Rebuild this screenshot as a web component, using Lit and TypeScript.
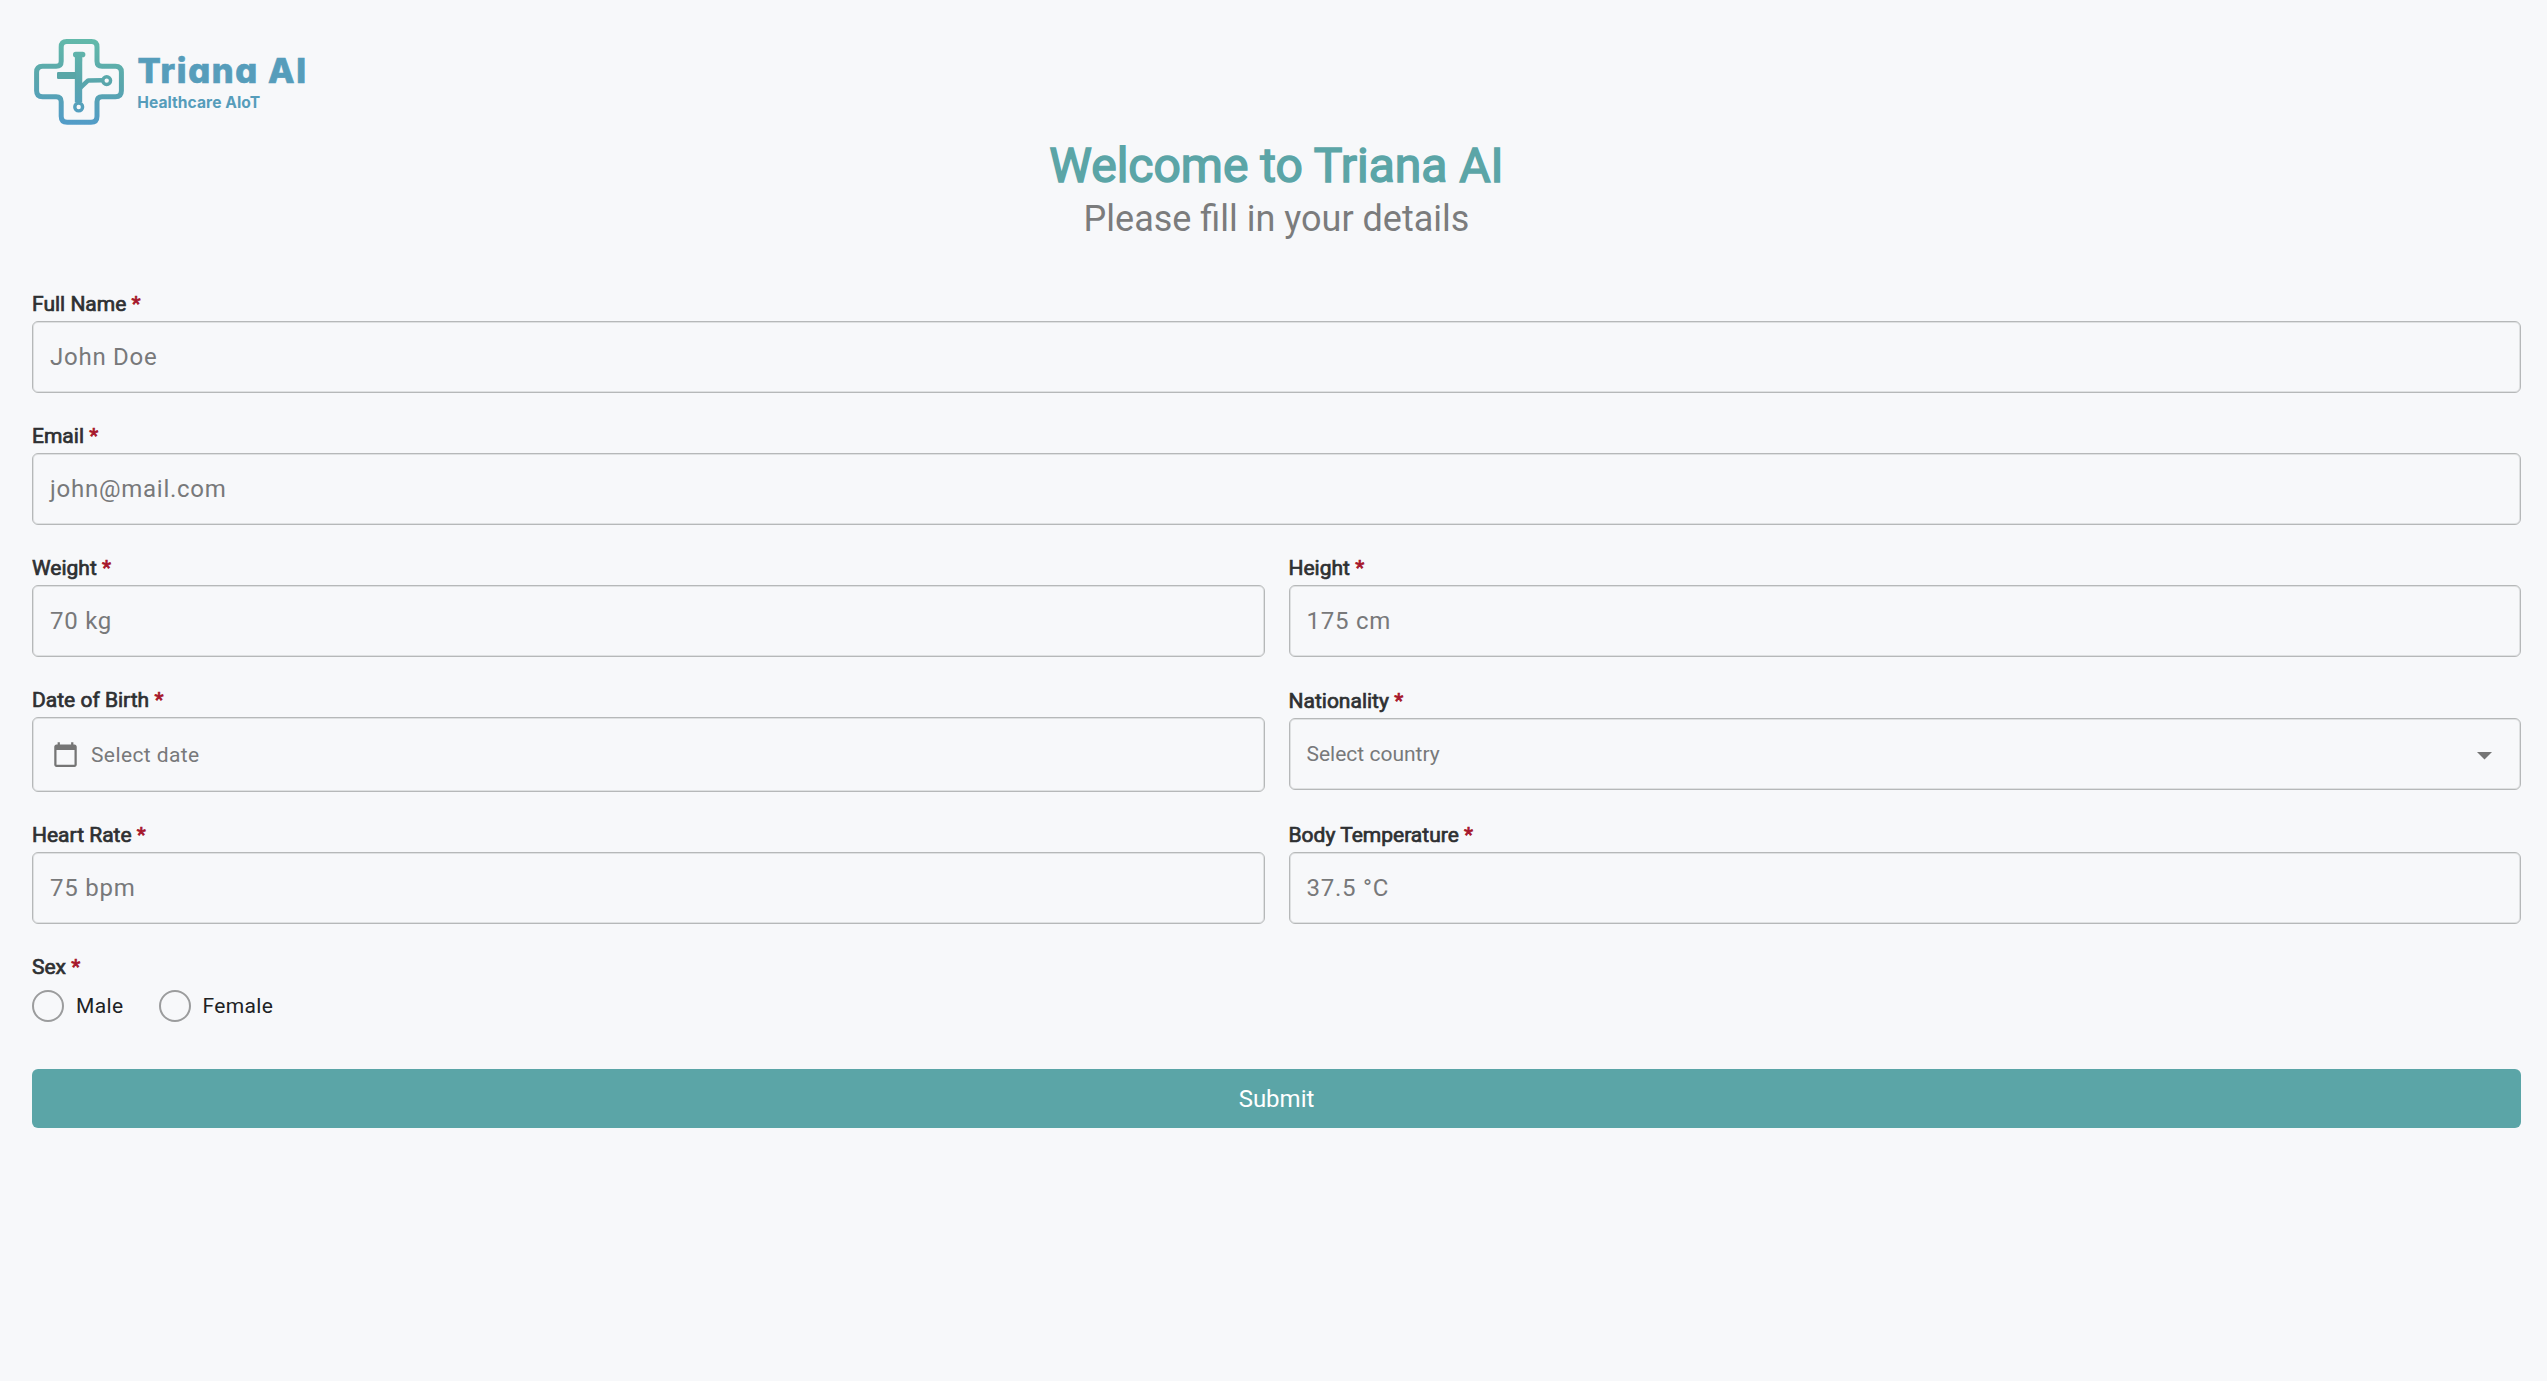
import { LitElement, html, svg, css, nothing } from "lit";
import { customElement, property } from "lit/decorators.js";

@customElement("brand-logo")
class BrandLogo extends LitElement {
  static styles = css`
    :host { display: block; height: 96px; }
    svg { display: block; }
    .name { font: 800 34.4px Inter, sans-serif; font-feature-settings: "cv11"; fill: #569dbb; stroke: #569dbb; stroke-width: .7px; stroke-linejoin: miter; }
    .tag { font: 700 15.6px Inter, sans-serif; fill: #569dbb; }
  `;
  render() {
    return html`<svg width="280" height="96" viewBox="32 32 280 96" role="img" aria-label="Triana AI">
      <defs>
        <linearGradient id="g" gradientUnits="userSpaceOnUse" x1="85" y1="40" x2="78" y2="124">
          <stop offset="0" stop-color="#62b9aa"></stop>
          <stop offset=".5" stop-color="#59a6ac"></stop>
          <stop offset="1" stop-color="#529cc8"></stop>
        </linearGradient>
      </defs>
      ${svg`
      <path fill="none" stroke="url(#g)" stroke-width="5"
        d="M66.7 41.6H91.5Q97 41.6 97 47.1V61.2Q97 66.2 102 66.2H115.4Q121.4 66.2 121.4 72.2V90.8Q121.4 96.8 115.4 96.8H102Q97 96.8 97 101.8V116.2Q97 122.2 91 122.2H67.2Q61.2 122.2 61.2 116.2V101.8Q61.2 96.8 56.2 96.8H42.6Q36.6 96.8 36.6 90.8V72.2Q36.6 66.2 42.6 66.2H56.2Q61.2 66.2 61.2 61.2V47.1Q61.2 41.6 66.7 41.6Z"/>
      <g fill="none" stroke="url(#g)">
        <path stroke-width="7.4" d="M78.6 55L78.5 102.5"/>
        <path stroke-width="5.6" stroke-linecap="round" d="M75.8 54.6L82.6 54.5"/>
        <path stroke-width="4.5" stroke-linejoin="round" d="M102 80.3L88.2 80.4L80 88"/>
        <circle cx="106.7" cy="80.6" r="3.9" stroke-width="3.4"/>
        <circle cx="78.7" cy="107" r="3.9" stroke-width="3.4"/>
      </g>
      <rect x="57" y="72" width="19" height="7" rx="1.2" fill="#59a6a7"/>`}
      <text class="name" x="137.5" y="82.6" textLength="168.5">Triana AI</text>
      <text class="tag" x="137.2" y="108" textLength="123">Healthcare AIoT</text>
    </svg>`;
  }
}

@customElement("form-field")
class FormField extends LitElement {
  @property() label = "";
  @property() hint = "";
  @property() kind = "text";
  static styles = css`
    :host { display: block; }
    .label { font-size: 21px; line-height: 25px; padding-top: 1px; margin-bottom: 4px; color: #2e3032; -webkit-text-stroke: .7px currentColor; }
    .star { color: #a6152a; }
    .box { box-sizing: border-box; height: 72px; border: 1px solid #b6b8b9; border-radius: 6px; box-shadow: inset 0 0 0 1px #dfe1e2;
      display: flex; align-items: center; padding: 0 28px 0 17px; color: #78797a; font-size: 24px; letter-spacing: .75px; }
    .date { height: 75px; font-size: 21px; letter-spacing: .4px; padding-left: 18.5px; gap: 12.5px; }
    .select { font-size: 21px; letter-spacing: 0; justify-content: space-between; }
    .drop { margin-top: 3px; }
    svg { display: block; fill: #757575; }
  `;
  render() {
    return html`
      <div class="label">${this.label} <span class="star">*</span></div>
      <div class="box ${this.kind}">
        ${this.kind === "date"
          ? html`<svg width="27" height="27" viewBox="0 0 24 24"><path d="M20 3h-1V1h-2v2H7V1H5v2H4c-1.1 0-2 .9-2 2v16c0 1.1.9 2 2 2h16c1.1 0 2-.9 2-2V5c0-1.1-.9-2-2-2zm0 18H4V8h16v13z"/></svg>`
          : nothing}
        <span>${this.hint}</span>
        ${this.kind === "select"
          ? html`<svg class="drop" width="15" height="8" viewBox="0 0 15 8"><path d="M0 0H15L7.5 7.5Z"/></svg>`
          : nothing}
      </div>`;
  }
}

@customElement("app-root")
class AppRoot extends LitElement {
  static styles = css`
    :host { display: block; box-sizing: border-box; min-height: 100vh; background: #f7f8fa; padding: 32px 26px 32px 32px; font-family: Roboto, sans-serif; }
    h1, h2 { margin: 0; font-weight: 400; text-align: center; }
    h1 { margin-top: 10px; font-size: 48px; line-height: 56px; color: #5ba5a7; -webkit-text-stroke: 1.5px currentColor; }
    h2 { margin-top: 4px; font-size: 36px; line-height: 42px; color: #7b7c7d; }
    .form { margin-top: 51px; display: grid; grid-template-columns: 1fr 1fr; gap: 30px 24px; }
    .wide { grid-column: 1 / -1; }
    .nudge { padding-top: 1px; }
    .label { font-size: 21px; line-height: 25px; padding-top: 1px; color: #2e3032; -webkit-text-stroke: .7px currentColor; }
    .star { color: #a6152a; }
    .radios { display: flex; gap: 35px; margin-top: 10px; }
    .radio { display: flex; align-items: center; gap: 12px; height: 32px; font-size: 21px; letter-spacing: .375px; color: #202224; }
    .dot { box-sizing: border-box; width: 32px; height: 32px; border: 2px solid #9b9c9d; border-radius: 50%; }
    .submit { display: block; width: 100%; height: 59px; margin-top: 47px; border: 0; border-radius: 6px; background: #5ba5a7; color: #fff; font: 24px Roboto, sans-serif; }
  `;
  render() {
    return html`
      <brand-logo></brand-logo>
      <h1>Welcome to Triana AI</h1>
      <h2>Please fill in your details</h2>
      <div class="form">
        <form-field class="wide" label="Full Name" hint="John Doe"></form-field>
        <form-field class="wide" label="Email" hint="john@mail.com"></form-field>
        <form-field label="Weight" hint="70 kg"></form-field>
        <form-field label="Height" hint="175 cm"></form-field>
        <form-field label="Date of Birth" hint="Select date" kind="date"></form-field>
        <form-field class="nudge" label="Nationality" hint="Select country" kind="select"></form-field>
        <form-field label="Heart Rate" hint="75 bpm"></form-field>
        <form-field label="Body Temperature" hint="37.5 °C"></form-field>
        <div class="wide">
          <div class="label">Sex <span class="star">*</span></div>
          <div class="radios">
            ${["Male", "Female"].map((s) => html`<div class="radio"><span class="dot"></span>${s}</div>`)}
          </div>
        </div>
      </div>
      <button class="submit">Submit</button>`;
  }
}
